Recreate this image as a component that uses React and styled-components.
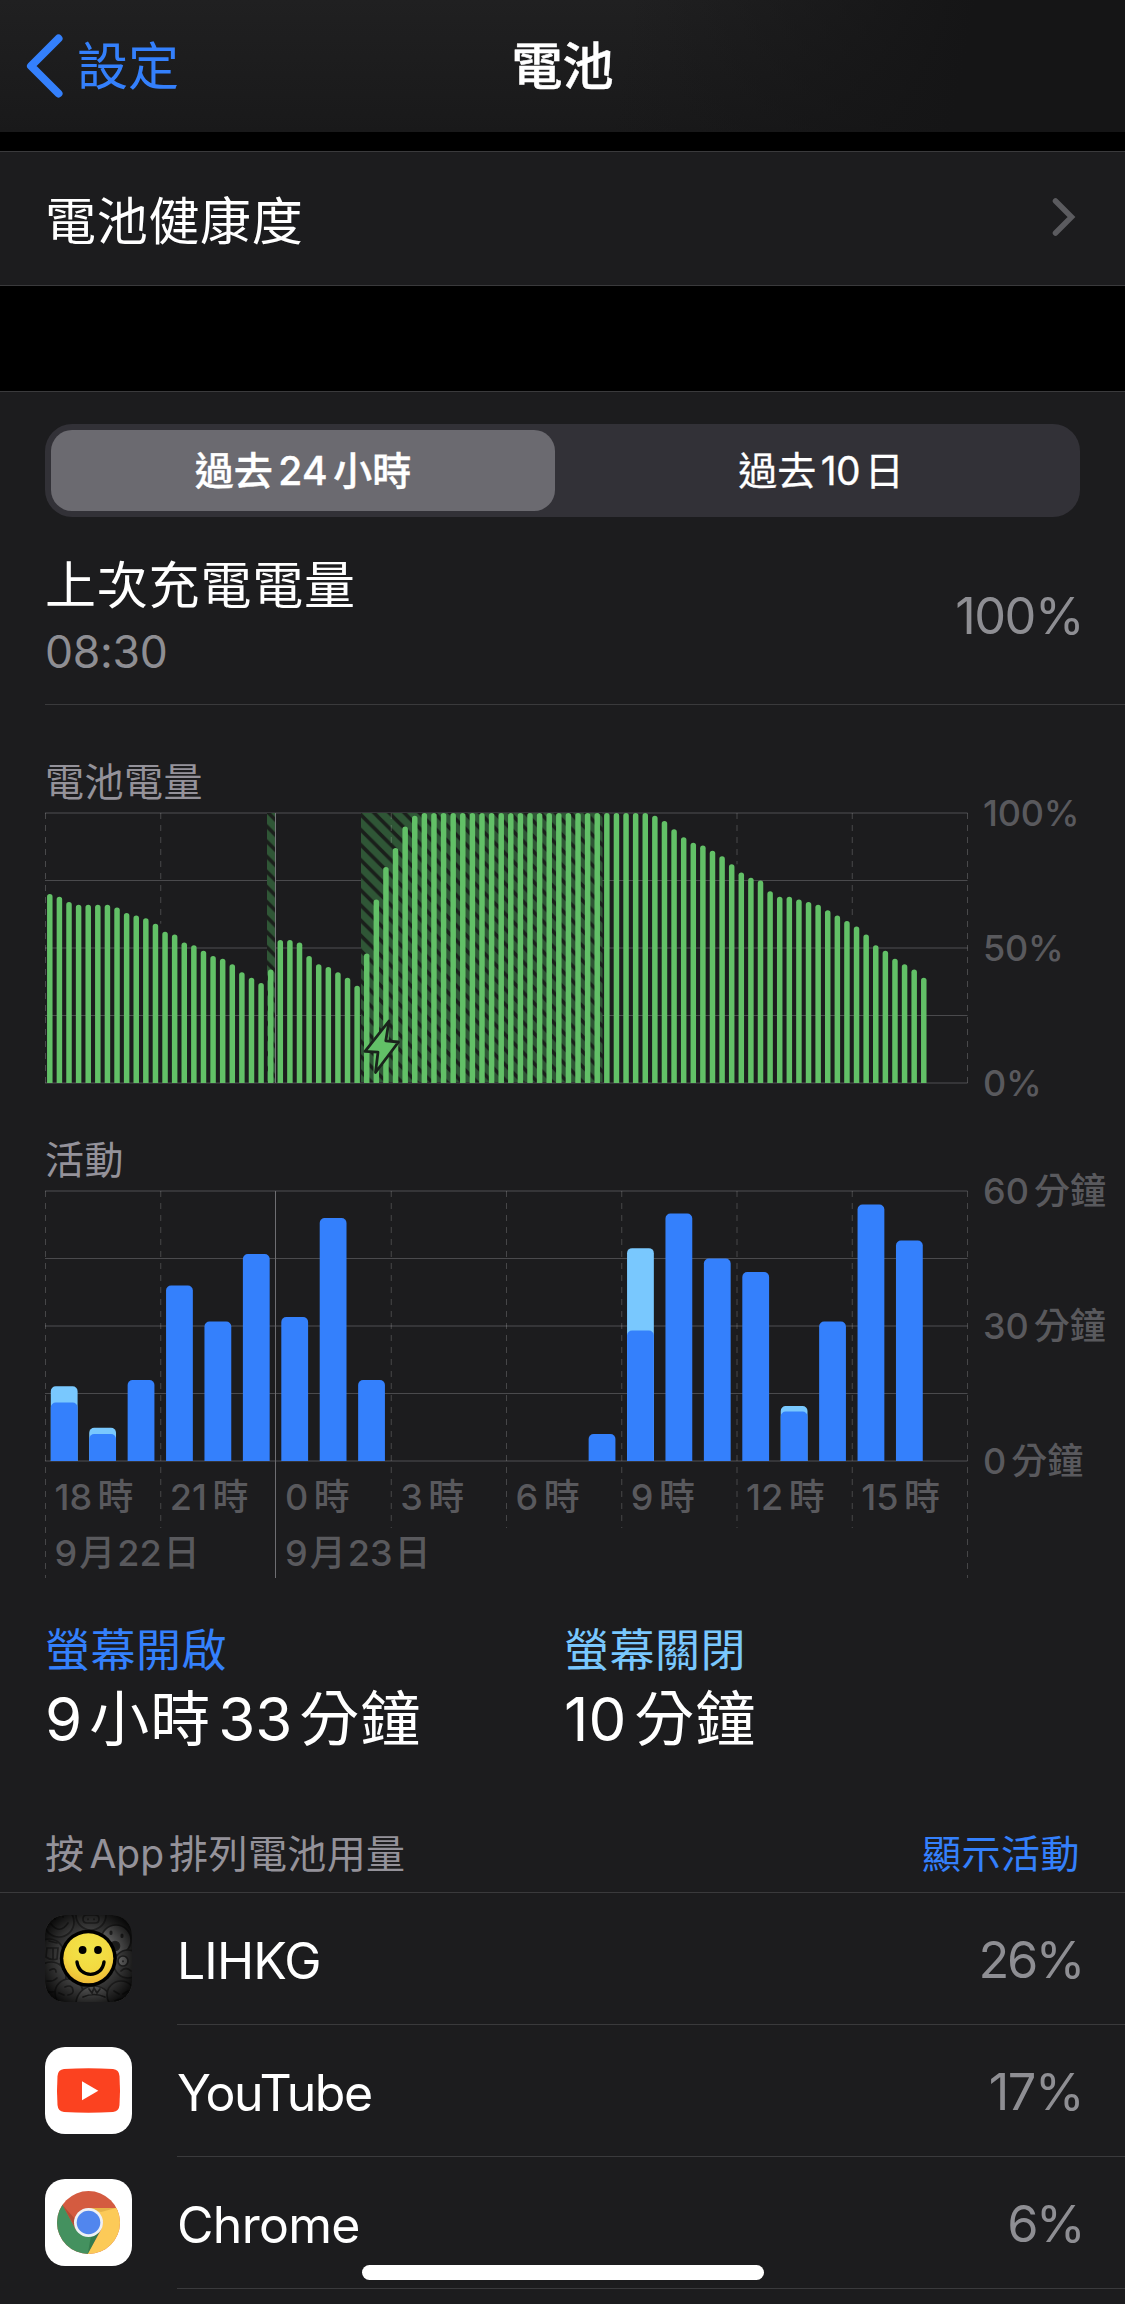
import React from "react";
import styled, { createGlobalStyle } from "styled-components";

const Global = createGlobalStyle`
  html, body { margin: 0; padding: 0; background: #000; }
  * { box-sizing: border-box; }
  body { font-family: Inter, "Noto Sans CJK TC", sans-serif; }
`;

const C = {
  panel: "#1c1c1e",
  line: "#3a3a3c",
  grey: "#8e8e93",
  heading: "#94929a",
  dim: "#59595d",
  blue: "#3480fc",
  sky: "#79c8fe",
  green: "#62c067",
};

const Screen = styled.div`
  position: relative;
  width: 1125px;
  height: 2304px;
  overflow: hidden;
  background: ${C.panel};
  display: flex;
  flex-direction: column;
`;

const Label = styled.span`
  display: block;
  white-space: nowrap;
  font-size: ${(p) => p.$size}px;
  line-height: ${(p) => p.$lh || p.$size}px;
  font-weight: ${(p) => p.$weight || 400};
  color: ${(p) => p.$color || "#fff"};
  letter-spacing: ${(p) => p.$track ?? 0}px;
  -webkit-text-stroke: ${(p) => p.$embolden || 0}px currentColor;
`;

const Latin = styled.span`
  letter-spacing: ${(p) => p.$track}px;
  margin-left: ${(p) => (p.$first ? 0 : p.$gap)}px;
  margin-right: ${(p) => (p.$last ? 0 : p.$gap)}px;
`;

function Mixed({ text, latin = 0, gap = 5, ...rest }) {
  const runs = text.match(/[ -~]+|[^ -~]+/g);
  return (
    <Label {...rest}>
      {runs.map((run, i) =>
        /[ -~]/.test(run) ? (
          <Latin key={i} $track={latin} $gap={gap} $first={i === 0} $last={i === runs.length - 1}>
            {run}
          </Latin>
        ) : (
          run
        )
      )}
    </Label>
  );
}

const NavBar = styled.header`
  height: 132px;
  flex: none;
  display: grid;
  grid-template-columns: 1fr auto 1fr;
  align-items: center;
  padding: 0 25px;
  background: linear-gradient(100deg, rgba(22, 22, 23, 0) 55%, #151516 85%),
    linear-gradient(180deg, #202021, #19191a);
`;

const Back = styled.div`
  display: flex;
  align-items: center;
  gap: 13px;
`;

const Gap = styled.div`
  flex: none;
  height: ${(p) => p.$h}px;
  background: #000;
`;

const HealthCell = styled.section`
  flex: none;
  height: 135px;
  border-top: 1px solid ${C.line};
  border-bottom: 1px solid ${C.line};
  padding: 6px 49px 0 45px;
  display: flex;
  align-items: center;
  justify-content: space-between;
`;

const Chevron = styled.svg`
  margin-bottom: 9px;
`;

const Panel = styled.main`
  flex: 1;
  border-top: 1px solid ${C.line};
  padding-top: 32px;
  display: flex;
  flex-direction: column;
`;

const Segmented = styled.div`
  flex: none;
  margin: 0 45px;
  height: 93px;
  padding: 6px;
  border-radius: 27px;
  background: #323137;
  display: grid;
  grid-template-columns: 504px 1fr;
`;

const Segment = styled.div`
  border-radius: 21px;
  background: ${(p) => (p.$active ? "#6b6a70" : "transparent")};
  padding-left: ${(p) => (p.$active ? 0 : 13)}px;
  display: flex;
  align-items: center;
  justify-content: center;
`;

const LastCharge = styled.div`
  flex: none;
  margin-left: 45px;
  height: 188px;
  padding: 39px 42px 0 0;
  border-bottom: 1px solid ${C.line};
  display: flex;
  justify-content: space-between;
`;

const Stack = styled.div`
  display: flex;
  flex-direction: column;
  gap: ${(p) => p.$gap || 0}px;
`;

const ChargeValue = styled.div`
  padding-top: 35px;
`;

const ChartTitle = styled.div`
  flex: none;
  margin: ${(p) => p.$top}px 0 0 45px;
  height: 50px;
`;

const ChartRow = styled.div`
  flex: none;
  margin-left: 45px;
  display: flex;
  height: ${(p) => p.$h}px;
`;

const Plot = styled.div`
  width: 924px;
  display: grid;
  align-content: start;
  > * { grid-area: 1 / 1; }
`;

const Graph = styled.svg`
  display: block;
`;

const YAxis = styled.div`
  height: 310px;
  margin: -19px 0 0 14px;
  display: flex;
  flex-direction: column;
  justify-content: space-between;
`;

const XAxis = styled.div`
  padding-top: 286px;
  display: flex;
  flex-direction: column;
  gap: 14px;
`;

const TickRow = styled.div`
  display: grid;
  grid-template-columns: repeat(8, 115.25px);
  padding-left: 9.5px;
`;

const Tick = styled.div`
  grid-column: ${(p) => p.$col};
`;

const Totals = styled.div`
  flex: none;
  height: 180px;
  padding: 1px 45px 0 45px;
  display: grid;
  grid-template-columns: 519px 1fr;
`;

const ListHead = styled.div`
  flex: none;
  height: 88px;
  padding: 28px 45px 0 45px;
  border-bottom: 1px solid ${C.line};
  display: flex;
  justify-content: space-between;
`;

const Row = styled.div`
  flex: none;
  display: flex;
  height: 132px;
  padding-left: 45px;
`;

const RowIcon = styled.svg`
  flex: none;
  width: 87px;
  height: 87px;
  margin: 22px 45px 0 0;
  border-radius: 20px;
`;

const RowBody = styled.div`
  flex: 1;
  border-bottom: 1px solid ${C.line};
  padding: 4px 42px 0 0;
  display: flex;
  align-items: center;
  justify-content: space-between;
`;

const HomeBar = styled.div`
  position: absolute;
  left: 362px;
  bottom: 24px;
  width: 402px;
  height: 15px;
  border-radius: 8px;
  background: #fff;
`;

const W = 922;
const STEP = W / 8;

const levels = [
  70, 69, 67, 66, 66, 66, 66, 65, 63, 62, 61, 59, 56, 55, 52, 51, 49, 47, 46, 44, 41, 39, 37, 42,
  53, 53, 52, 47, 44, 43, 41, 39, 36, 48, 68, 80, 87, 95, 99,
  ...Array(24).fill(100),
  99, 97, 94, 91, 89, 88, 86, 84, 81, 78, 76, 75, 71, 69, 69, 68, 67, 66, 64, 62, 60, 58, 55, 51,
  49, 46, 44, 42, 39,
];

const usage = [
  [13, 16.6], [6, 7.4], [18], [39], [31], [46], [32], [54], [18], [], [], [], [], [], [6],
  [29, 47.3], [55], [45], [42], [11, 12.2], [31], [57], [49],
];

function Grid() {
  return (
    <g>
      {[0, 135, 270].map((y) => (
        <rect key={y} x="0" y={y} width={W + 0.5} height="2" fill="#353538" />
      ))}
      {[68, 203].map((y) => (
        <rect key={y} x="0" y={y} width={W + 0.5} height="1" fill="#4a4a4d" />
      ))}
    </g>
  );
}

function roundTop(x, y, w, bottom, r) {
  const k = Math.min(r, bottom - y);
  return `M${x} ${bottom}V${y + k}a${k} ${k} 0 0 1 ${k} ${-k}H${x + w - k}a${k} ${k} 0 0 1 ${k} ${k}V${bottom}Z`;
}

function BatteryGraph() {
  const pitch = W / 96;
  return (
    <Graph width="924" height="272" viewBox="0 0 924 272">
      <defs>
        <pattern id="hatch" width="15.1" height="15.1" patternUnits="userSpaceOnUse" patternTransform="translate(1 5)">
          <rect width="15.1" height="15.1" fill="#2f5636" />
          <path d="M-2 -2L17.1 17.1M-2 13.1L2 17.1M13.1 -2L17.1 2" stroke="#1a1f1b" strokeWidth="3.6" />
        </pattern>
      </defs>
      <Grid />
      <rect x="222" y="1" width="8.5" height="269" fill="url(#hatch)" />
      <rect x="316" y="1" width="241.5" height="269" fill="url(#hatch)" />
      {[0, 1, 3, 4, 5, 6, 7, 8].map((n) => {
        const near = n === 0 ? 0 : Math.max(levels[n * 12 - 1] || 0, levels[n * 12] || 0);
        const end = 271 - near * 2.7;
        return end < 3 ? null : (
          <line key={n} x1={n * STEP + 0.5} x2={n * STEP + 0.5} y1="1" y2={end} stroke="#fff" strokeOpacity="0.2" strokeDasharray="6 6" />
        );
      })}
      {levels.map((v, i) => (
        <path key={i} d={roundTop(i * pitch + 2.05, 271 - v * 2.7, 5.5, 271, 2.75)} fill={C.green} />
      ))}
      <line x1="230.5" x2="230.5" y1="1" y2="271" stroke="#77777b" />
      <path
        d="M344 209L320 239.3L333 240.2L330.5 260.5L353.5 230L340.8 228.8Z"
        fill={C.green}
        stroke="#1a231c"
        strokeWidth="2.8"
        strokeLinejoin="round"
      />
    </Graph>
  );
}

function ActivityGraph() {
  const pitch = W / 24;
  return (
    <Graph width="924" height="388" viewBox="0 0 924 388">
      <Grid />
      {[0, 1, 3, 4, 5, 6, 7, 8].map((n) => (
        <line key={n} x1={n * STEP + 0.5} x2={n * STEP + 0.5} y1="1" y2={n % 8 ? 338 : 388} stroke="#fff" strokeOpacity="0.19" strokeDasharray="6 6" />
      ))}
      <line x1="230.5" x2="230.5" y1="1" y2="388" stroke="#6e6e72" />
      {usage.map(([on, all], i) => (
        <g key={i}>
          {all && <path d={roundTop(i * pitch + 5.8, 271 - all * 4.5, 26.8, 271, 5)} fill={C.sky} />}
          {on && <path d={roundTop(i * pitch + 5.8, 271 - on * 4.5, 26.8, 271, 5)} fill={C.blue} />}
        </g>
      ))}
    </Graph>
  );
}

function LihkgIcon() {
  return (
    <RowIcon viewBox="0 0 87 87">
      <defs>
        <radialGradient id="vignette" gradientUnits="userSpaceOnUse" cx="43.5" cy="43.5" r="60">
          <stop offset="0.45" stopColor="#000" stopOpacity="0" />
          <stop offset="0.7" stopColor="#000" stopOpacity="0.5" />
          <stop offset="0.92" stopColor="#000" stopOpacity="0.95" />
        </radialGradient>
        <radialGradient id="yellow" cx="0.5" cy="0.3" r="0.75">
          <stop offset="0" stopColor="#f1e54a" />
          <stop offset="0.6" stopColor="#f3d940" />
          <stop offset="1" stopColor="#efb534" />
        </radialGradient>
      </defs>
      <rect width="87" height="87" fill="#3a3a3a" />
      <g fill="#424242" stroke="#242424" strokeWidth="1.7" strokeLinecap="round">
        <circle cx="14" cy="7" r="15" />
        <path d="M6 9Q15 20 23 8M10 3v1M18 1v1" fill="none" />
        <circle cx="46" cy="0" r="15" />
        <path d="M38 4q0-4 4-4h8q4 0 4 4t-4 4h-8q-4 0-4-4ZM43 4v.5M49 4v.5" fill="none" />
        <circle cx="71" cy="25" r="15" fill="#5c5c5c" />
        <path d="M66 17v1.5M77 20v1.5" strokeWidth="3" />
        <circle cx="70" cy="31" r="4.5" fill="#1f1f1f" />
        <circle cx="4" cy="39" r="15" />
        <path d="M2 33H13L12 44Q6 46 1 42ZM8 33V44M4 26L12 28" fill="none" />
        <circle cx="83" cy="49" r="14" />
        <circle cx="78" cy="46" r="5" fill="#6a6a6a" />
        <path d="M78 46v.5M76 56Q81 51 86 56" fill="none" />
        <circle cx="6" cy="62" r="15" />
        <path d="M5 55Q11 52 11 57M2 66Q8 67 12 63" fill="none" />
        <circle cx="24" cy="78" r="14" />
        <path d="M20 72Q27 69 28 75Q29 79 23 80M14 78l5 2" fill="none" />
        <circle cx="49" cy="89" r="18" fill="#545454" />
        <path d="M44 74l3 4 2-5 3 5 3-4M38 82Q49 77 60 82" fill="none" />
        <circle cx="76" cy="80" r="14" />
        <path d="M69 76l5 3M83 76l-5 3M70 86q6-4 12 0" fill="none" />
      </g>
      <rect width="87" height="87" fill="url(#vignette)" />
      <circle cx="43.3" cy="43.3" r="28.5" fill="#000" />
      <circle cx="43.3" cy="43.3" r="25" fill="url(#yellow)" />
      <circle cx="37.6" cy="35" r="3.9" />
      <circle cx="53" cy="35" r="3.9" />
      <path d="M32 47C34 63.5 57 63.5 59 47" fill="none" stroke="#000" strokeWidth="3.4" strokeLinecap="round" />
    </RowIcon>
  );
}

function YouTubeIcon() {
  return (
    <RowIcon viewBox="0 0 87 87">
      <rect width="87" height="87" fill="#fff" />
      <path d="M19 22Q43.5 20.6 68 22Q74 22.6 74.5 29Q75.5 43.5 74.5 58Q74 64.4 68 65Q43.5 66.4 19 65Q13 64.4 12.5 58Q11.5 43.5 12.5 29Q13 22.6 19 22Z" fill="#fb4220" />
      <path d="M37 34.3V53.2L53.3 43.7Z" fill="#fff" />
    </RowIcon>
  );
}

function ChromeIcon() {
  return (
    <RowIcon viewBox="0 0 87 87">
      <defs>
        <clipPath id="disc">
          <circle cx="43.5" cy="43.5" r="31.5" />
        </clipPath>
      </defs>
      <rect width="87" height="87" fill="#fff" />
      <g clipPath="url(#disc)">
        <rect width="87" height="87" fill="#d45b40" />
        <path d="M8 10L17.5 26L31 51L43.5 57L56 50L42.7 76L42 87H0V10Z" fill="#44915f" />
        <path d="M43.5 29H87V87H36L42.7 75L56 51L58 43Z" fill="#fcca58" />
        <path d="M17.5 26L29.5 47.5L30 40Z" fill="#9c452f" opacity=".6" />
        <path d="M43.5 29H71L56 33Z" fill="#d9a13c" opacity=".6" />
        <path d="M56 50L42.7 75L46 57Z" fill="#2c6c42" opacity=".6" />
      </g>
      <circle cx="43.5" cy="43.5" r="14.5" fill="#eef0f4" />
      <circle cx="43.5" cy="43.5" r="11.8" fill="#5186ee" />
    </RowIcon>
  );
}

const apps = [
  { name: "LIHKG", pct: "26%", Icon: LihkgIcon, track: -0.9, pctTrack: -2.4 },
  { name: "YouTube", pct: "17%", Icon: YouTubeIcon, track: -1.5, pctTrack: -1.5 },
  { name: "Chrome", pct: "6%", Icon: ChromeIcon, track: -0.7, pctTrack: -2.6 },
];

const hours = ["18時", "21時", "0時", "3時", "6時", "9時", "12時", "15時"];

export default function App() {
  return (
    <Screen>
      <Global />
      <NavBar>
        <Back>
          <svg width="39" height="64" viewBox="0 0 39 64">
            <path d="M33.5 4.5L6 32L33.5 59.5" fill="none" stroke={C.blue} strokeWidth="8" strokeLinecap="round" strokeLinejoin="round" />
          </svg>
          <Label $size={51} $color={C.blue}>設定</Label>
        </Back>
        <Label $size={51} $weight={500} $embolden={0.5}>電池</Label>
      </NavBar>
      <Gap $h={19} />
      <HealthCell>
        <Label $size={51} $track={0.7}>電池健康度</Label>
        <Chevron width="25" height="40" viewBox="0 0 25 40">
          <path d="M4.5 4L20.5 20L4.5 36" fill="none" stroke="#5b5b5f" strokeWidth="5.5" strokeLinecap="round" strokeLinejoin="miter" />
        </Chevron>
      </HealthCell>
      <Gap $h={105} />
      <Panel>
        <Segmented>
          <Segment $active>
            <Mixed text="過去24小時" $size={39} $weight={500} $embolden={0.4} gap={5.5} latin={0.3} />
          </Segment>
          <Segment>
            <Mixed text="過去10日" $size={39} $embolden={0.3} gap={4.5} latin={-0.4} />
          </Segment>
        </Segmented>
        <LastCharge>
          <Stack $gap={14}>
            <Label $size={51} $lh={60} $track={0.8}>上次充電電量</Label>
            <Label $size={44.5} $lh={44} $track={-0.3} $color={C.grey}>08:30</Label>
          </Stack>
          <ChargeValue>
            <Label $size={50.5} $lh={50} $track={-1.5} $color={C.grey}>100%</Label>
          </ChargeValue>
        </LastCharge>
        <ChartTitle $top={57}>
          <Label $size={39} $lh={40} $track={0.5} $color={C.heading}>電池電量</Label>
        </ChartTitle>
        <ChartRow $h={328}>
          <Plot>
            <BatteryGraph />
          </Plot>
          <YAxis>
            {["100%", "50%", "0%"].map((t) => (
              <Label key={t} $size={36} $lh={40} $weight={500} $track={-0.2} $color={C.dim}>{t}</Label>
            ))}
          </YAxis>
        </ChartRow>
        <ChartTitle $top={0}>
          <Label $size={39} $lh={40} $track={0.4} $color={C.heading}>活動</Label>
        </ChartTitle>
        <ChartRow $h={435}>
          <Plot>
            <ActivityGraph />
            <XAxis>
              <TickRow>
                {hours.map((t, i) => (
                  <Tick key={t} $col={i + 1}>
                    <Mixed text={t} gap={5.5} $size={36} $lh={42} $weight={500} $color={C.dim} />
                  </Tick>
                ))}
              </TickRow>
              <TickRow>
                <Tick $col={1}><Mixed text="9月22日" gap={2} $size={36} $lh={42} $weight={500} $color={C.dim} /></Tick>
                <Tick $col={3}><Mixed text="9月23日" gap={2} $size={36} $lh={42} $weight={500} $color={C.dim} /></Tick>
              </TickRow>
            </XAxis>
          </Plot>
          <YAxis>
            {["60分鐘", "30分鐘", "0分鐘"].map((t) => (
              <Mixed key={t} text={t} $size={36} $lh={40} $weight={500} $color={C.dim} />
            ))}
          </YAxis>
        </ChartRow>
        <Totals>
          <Stack $gap={10}>
            <Label $size={45} $lh={50} $track={0.5} $color={C.blue}>螢幕開啟</Label>
            <Mixed text="9小時33分鐘" gap={7} $size={60} $lh={66} $track={1} />
          </Stack>
          <Stack $gap={10}>
            <Label $size={45} $lh={50} $track={0.5} $color={C.sky}>螢幕關閉</Label>
            <Mixed text="10分鐘" gap={8} $size={60} $lh={66} $track={1} />
          </Stack>
        </Totals>
        <ListHead>
          <Mixed text="按App排列電池用量" $size={39} $lh={42} $track={0.4} $color={C.heading} />
          <Label $size={39} $lh={42} $track={0.5} $color={C.blue}>顯示活動</Label>
        </ListHead>
        {apps.map(({ name, pct, Icon, track, pctTrack }) => (
          <Row key={name}>
            <Icon />
            <RowBody>
              <Label $size={50} $track={track}>{name}</Label>
              <Label $size={50.5} $track={pctTrack} $color={C.grey}>{pct}</Label>
            </RowBody>
          </Row>
        ))}
      </Panel>
      <HomeBar />
    </Screen>
  );
}
